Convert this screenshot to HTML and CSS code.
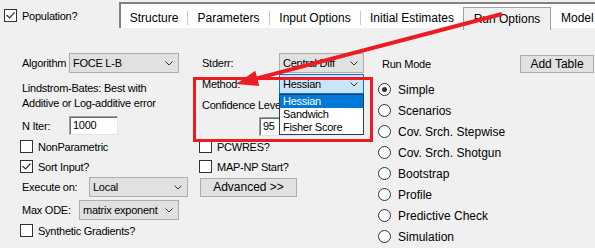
FILE: index.html
```html
<!DOCTYPE html>
<html lang="en">
<head>
  <meta charset="UTF-8">
  <title>Run Options</title>
  <link rel="stylesheet" href="styles.css">
</head>
<body>
<div class="screen">
  <div class="top">
    <div class="check pop">
      <span class="box"><svg width="11" height="11" viewBox="0 0 11 11"><polyline points="1.5,5 4.5,8 9.5,2.5"/></svg></span>
      <span>Population?</span>
    </div>
    <div class="tabs">
      <span class="tab t-structure">Structure</span>
      <span class="tab t-params">Parameters</span>
      <span class="tab t-input">Input Options</span>
      <span class="tab t-init">Initial Estimates</span>
      <span class="tab active">Run Options</span>
      <span class="tab t-model">Model</span>
    </div>
  </div>

  <div class="panel">
    <!-- left column -->
    <div class="col col-left">
      <div class="row r-algo">
        <span class="lbl w-algo">Algorithm</span>
        <div class="select s-algo"><span>FOCE L-B</span><svg width="8" height="5" viewBox="0 0 8 5"><polyline points="0.5,0.5 4,4 7.5,0.5"/></svg></div>
      </div>
      <p class="note">Lindstrom-Bates: Best with<br>Additive or Log-additive error</p>
      <div class="row r-iter">
        <span class="lbl w-algo">N Iter:</span>
        <div class="input i-iter">1000</div>
      </div>
      <div class="check r-nonpar"><span class="box"></span><span>NonParametric</span></div>
      <div class="check r-sort">
        <span class="box"><svg width="11" height="11" viewBox="0 0 11 11"><polyline points="1.5,5 4.5,8 9.5,2.5"/></svg></span>
        <span>Sort Input?</span>
      </div>
      <div class="row r-exec">
        <span class="lbl w-exec">Execute on:</span>
        <div class="select s-exec"><span>Local</span><svg width="8" height="5" viewBox="0 0 8 5"><polyline points="0.5,0.5 4,4 7.5,0.5"/></svg></div>
      </div>
      <div class="row r-ode">
        <span class="lbl w-ode">Max ODE:</span>
        <div class="select s-ode"><span>matrix exponent</span><svg width="8" height="5" viewBox="0 0 8 5"><polyline points="0.5,0.5 4,4 7.5,0.5"/></svg></div>
      </div>
      <div class="check r-synth"><span class="box"></span><span>Synthetic Gradients?</span></div>
    </div>

    <!-- middle column -->
    <div class="col col-mid">
      <div class="row r-stderr">
        <span class="lbl w-mid">Stderr:</span>
        <div class="select s-mid"><span>Central Diff</span><svg width="8" height="5" viewBox="0 0 8 5"><polyline points="0.5,0.5 4,4 7.5,0.5"/></svg></div>
      </div>
      <div class="row r-method">
        <span class="lbl w-mid">Method:</span>
        <div class="select s-mid focused"><span>Hessian</span><svg width="8" height="5" viewBox="0 0 8 5"><polyline points="0.5,0.5 4,4 7.5,0.5"/></svg></div>
      </div>
      <div class="lbl conf">Confidence Level</div>
      <div class="input i-conf">95</div>
      <div class="check r-pcwres"><span class="box"></span><span>PCWRES?</span></div>
      <div class="check r-mapnp"><span class="box"></span><span>MAP-NP Start?</span></div>
      <div class="button b-adv">Advanced &gt;&gt;</div>
    </div>

    <!-- right column -->
    <div class="col col-right">
      <div class="row r-head">
        <span class="lbl">Run Mode</span>
        <div class="button b-table">Add Table</div>
      </div>
      <ul class="radios">
        <li><span class="dot on"></span>Simple</li>
        <li><span class="dot"></span>Scenarios</li>
        <li><span class="dot"></span>Cov. Srch. Stepwise</li>
        <li><span class="dot"></span>Cov. Srch. Shotgun</li>
        <li><span class="dot"></span>Bootstrap</li>
        <li><span class="dot"></span>Profile</li>
        <li><span class="dot"></span>Predictive Check</li>
        <li><span class="dot"></span>Simulation</li>
      </ul>
    </div>
  </div>

  <!-- overlays: open dropdown, red marker box, arrow -->
  <div class="highlight"></div>
  <ul class="droplist">
    <li class="sel">Hessian</li>
    <li>Sandwich</li>
    <li>Fisher Score</li>
  </ul>
  <svg class="arrow" width="595" height="248" viewBox="0 0 595 248">
    <line x1="502" y1="14" x2="256" y2="78.6"/>
    <polygon points="236,84 259.3,86.1 255.3,70.7"/>
  </svg>
</div>
</body>
</html>
```

FILE: styles.css
```css
body {
    background-color: #f0f0f0;
    color: #000;
    font-family: "Liberation Sans", Arial, sans-serif;
    font-size: 11px;
    letter-spacing: -0.25px;
    margin: 0;
}
.screen {
    height: 248px;
    overflow: hidden;
    position: relative;
    width: 595px;
}

/* top bar */
.top {
    display: flex;
    height: 30px;
}
.pop {
    align-self: flex-start;
    gap: 6px;
    margin: 9px 0 0 4px;
    width: 115px;
}
.tabs {
    align-items: flex-end;
    background-color: #fff;
    border-left: 2px solid #828282;
    border-top: 2px solid #828282;
    box-sizing: border-box;
    display: flex;
    flex: 1;
    font-size: 12px;
    height: 26px;
    letter-spacing: 0;
    margin-top: 2px;
}
.tab {
    border-right: 1px solid #c8c8c8;
    box-sizing: border-box;
    height: 14px;
    line-height: 14px;
    margin-bottom: 3px;
    text-align: center;
    white-space: nowrap;
}
.t-structure { width: 67px; }
.t-params { width: 82px; }
.t-input { width: 91px; }
.t-init { border-right: none; width: 102px; }
.tab.active {
    align-self: flex-end;
    background-color: #f0f0f0;
    border: 1px solid #a0a0a0;
    border-bottom: none;
    height: 23px;
    margin-bottom: -2px;
    padding-top: 4px;
    width: 88px;
}
.t-model {
    border-right: none;
    padding-left: 10px;
    text-align: left;
}

/* common controls */
.row {
    align-items: center;
    display: flex;
}
.lbl {
    box-sizing: border-box;
    padding-left: 2px;
    white-space: nowrap;
}
.check {
    align-items: center;
    display: flex;
    gap: 5px;
    height: 13px;
    white-space: nowrap;
}
.box {
    background-color: #fff;
    border: 1px solid #333;
    box-sizing: border-box;
    flex: none;
    height: 13px;
    width: 13px;
}
.box svg, .select svg {
    display: block;
    fill: none;
    stroke: #333;
    stroke-width: 1.2;
}
.select svg { stroke-width: 1; }
.select {
    align-items: center;
    background-color: #e1e1e1;
    border: 1px solid #adadad;
    box-sizing: border-box;
    display: flex;
    height: 20px;
    justify-content: space-between;
    padding: 0 5px 0 3px;
    white-space: nowrap;
}
.select.focused {
    background-color: #cce4f7;
    border-color: #0078d7;
}
.input {
    background-color: #fff;
    border: 1px solid;
    border-color: #a0a0a0 #e3e3e3 #e3e3e3 #a0a0a0;
    box-shadow: inset 1px 1px 0 #696969;
    box-sizing: border-box;
    height: 19px;
    line-height: 17px;
    padding-left: 3px;
}
.button {
    background-color: #e1e1e1;
    border: 1px solid #adadad;
    box-sizing: border-box;
    font-size: 12px;
    letter-spacing: 0;
    text-align: center;
}

/* columns */
.panel {
    align-items: start;
    display: grid;
    grid-template-columns: 199px 179px 1fr;
}
.col {
    display: flex;
    flex-direction: column;
}
.col-left { padding-left: 20px; }

.r-algo { height: 20px; margin-top: 23px; }
.w-algo { width: 49px; }
.s-algo { width: 110px; }
.note {
    line-height: 15px;
    margin: 8px 0 0;
    padding-left: 2px;
}
.r-iter { height: 19px; margin-top: 5px; }
.i-iter { width: 49px; }
.r-nonpar { margin-top: 5px; }
.r-sort { margin-top: 7px; }
.r-exec { height: 20px; margin-top: 4px; }
.w-exec { width: 69px; }
.s-exec { width: 99px; }
.r-ode { height: 20px; margin-top: 3px; }
.w-ode { width: 59px; }
.s-ode { width: 100px; }
.r-synth { margin-top: 4px; }

.r-stderr { margin-top: 23px; }
.r-method { margin-top: 1px; }
.w-mid { padding-left: 3px; width: 80px; }
.s-mid { width: 85px; }
.conf {
    line-height: 13px;
    margin-top: 5px;
    padding-left: 3px;
}
.i-conf { margin: 5px 0 0 60px; width: 40px; }
.r-pcwres { margin-top: 4px; }
.r-mapnp { margin-top: 7px; }
.b-adv {
    height: 19px;
    line-height: 17px;
    margin: 5px 0 0 1px;
    width: 97px;
}

.r-head { height: 18px; margin-top: 25px; }
.r-head .lbl { padding-left: 4px; }
.b-table {
    height: 18px;
    line-height: 16px;
    margin: 0 1px 0 auto;
    width: 74px;
}
.radios {
    font-size: 12px;
    letter-spacing: 0;
    list-style: none;
    margin: 6px 0 0;
    padding: 0;
}
.radios li {
    align-items: center;
    display: flex;
    gap: 7px;
    height: 21px;
}
.dot {
    align-items: center;
    background-color: #fff;
    border: 1px solid #333;
    border-radius: 50%;
    box-sizing: border-box;
    display: flex;
    height: 13px;
    justify-content: center;
    width: 13px;
}
.dot.on::after {
    background-color: #333;
    border-radius: 50%;
    content: "";
    height: 5px;
    width: 5px;
}

/* overlays */
.highlight {
    border: 3px solid #ed1c24;
    box-sizing: border-box;
    height: 65px;
    left: 193px;
    position: absolute;
    top: 77px;
    width: 180px;
}
.droplist {
    background-color: #fff;
    border: 1px solid #1f3f6f;
    box-sizing: border-box;
    height: 41px;
    left: 279px;
    list-style: none;
    margin: 0;
    padding: 0;
    position: absolute;
    top: 94px;
    width: 85px;
}
.droplist li {
    height: 13px;
    line-height: 13px;
    padding-left: 3px;
}
.droplist li.sel {
    background-color: #0078d7;
    color: #fff;
}
.arrow {
    left: 0;
    pointer-events: none;
    position: absolute;
    top: 0;
}
.arrow line {
    stroke: #ed1c24;
    stroke-width: 4;
}
.arrow polygon {
    fill: #ed1c24;
}
```
